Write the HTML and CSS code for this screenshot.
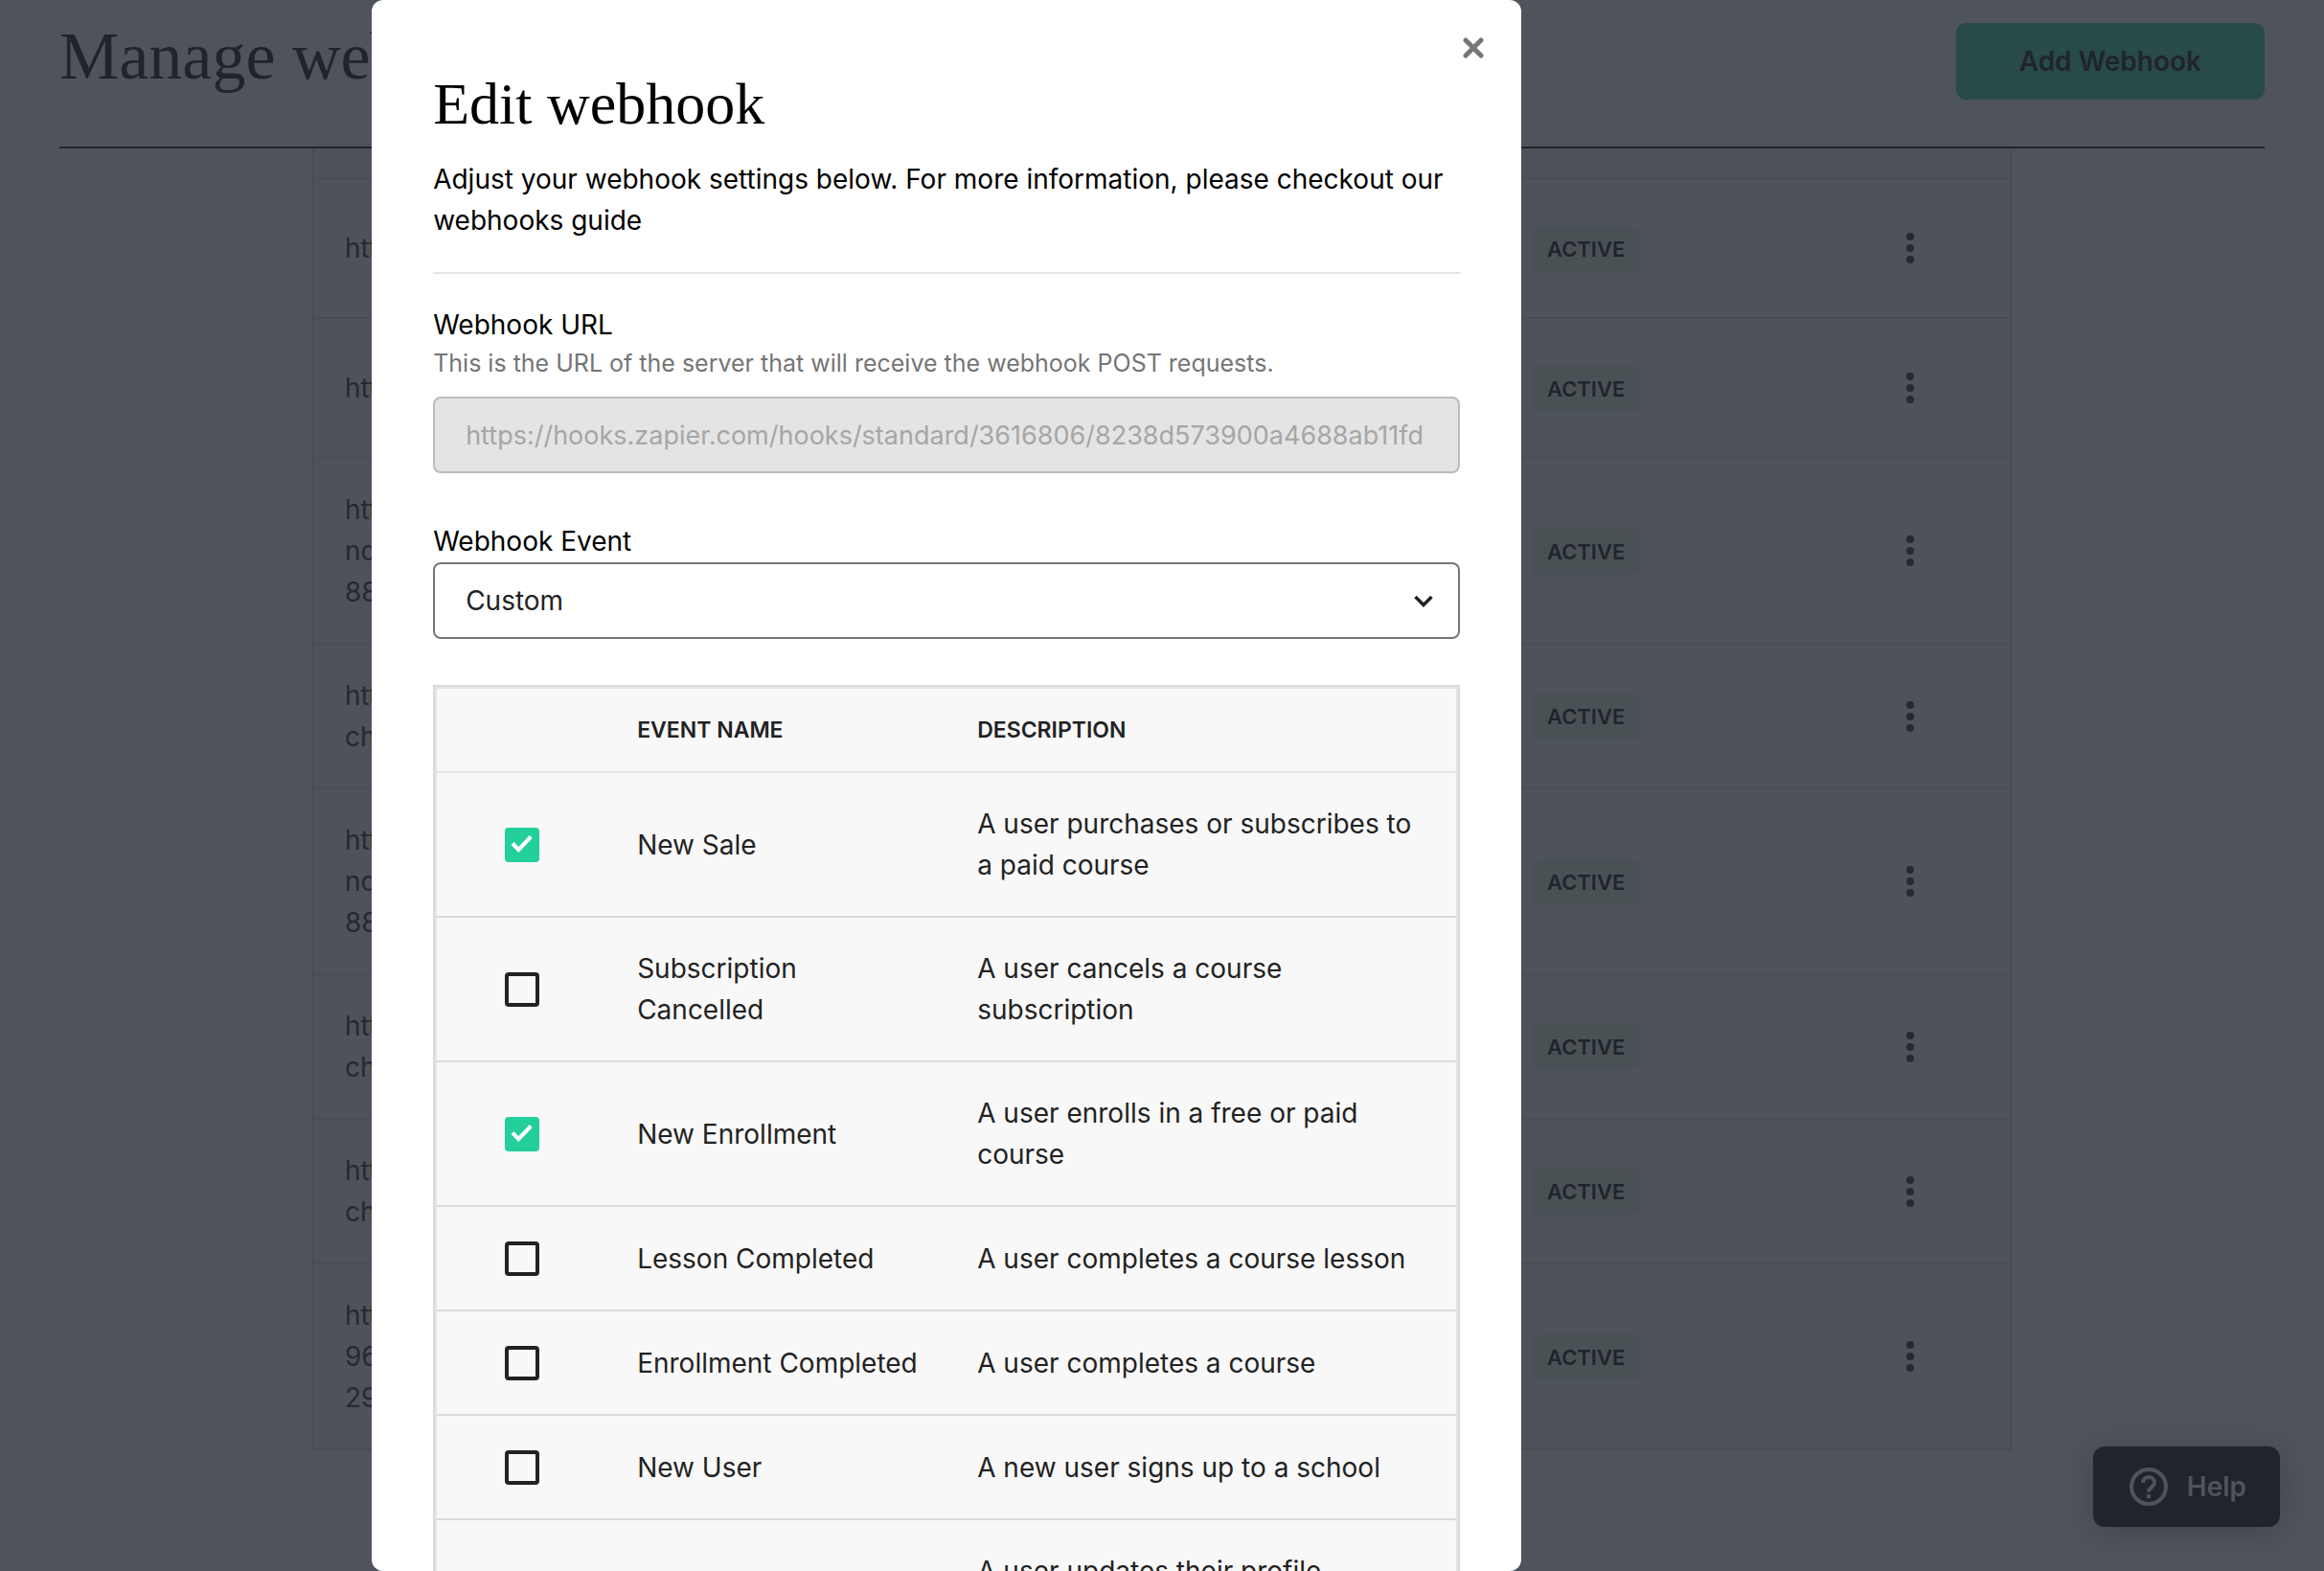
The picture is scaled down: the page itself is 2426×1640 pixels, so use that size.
FILE: index.html
```html
<!DOCTYPE html>
<html lang="en">
<head>
  <meta charset="utf-8">
  <meta name="viewport" content="width=device-width, initial-scale=1">
  <title>Manage webhooks</title>
  <link rel="stylesheet" href="styles.css">
</head>
<body>
  <div class="page">
    <header class="page-header">
      <h1 class="page-title">Manage webhooks</h1>
      <button class="button-primary" type="button">Add Webhook</button>
    </header>
    <main class="page-body">
      <table class="webhooks">
        <colgroup>
          <col class="col-url">
          <col class="col-status">
          <col class="col-actions">
        </colgroup>
        <thead>
          <tr><th aria-label="URL"></th><th aria-label="Status"></th><th aria-label="Actions"></th></tr>
        </thead>
        <tbody>
          <tr>
            <td>https://hooks.zapier.com</td>
            <td><span class="badge">ACTIVE</span></td>
            <td class="actions"><button class="menu-button" type="button" aria-label="Webhook actions"><svg width="8" height="32" viewBox="0 0 8 32"><circle cx="4" cy="4" r="4"/><circle cx="4" cy="16" r="4"/><circle cx="4" cy="28" r="4"/></svg></button></td>
          </tr>
          <tr>
            <td>https://hooks.zapier.com</td>
            <td><span class="badge">ACTIVE</span></td>
            <td class="actions"><button class="menu-button" type="button" aria-label="Webhook actions"><svg width="8" height="32" viewBox="0 0 8 32"><circle cx="4" cy="4" r="4"/><circle cx="4" cy="16" r="4"/><circle cx="4" cy="28" r="4"/></svg></button></td>
          </tr>
          <tr>
            <td>https://hooks.zapier.com/hooks/sta<br>ndard/3616806/8238d573900a46<br>88ab11f</td>
            <td><span class="badge">ACTIVE</span></td>
            <td class="actions"><button class="menu-button" type="button" aria-label="Webhook actions"><svg width="8" height="32" viewBox="0 0 8 32"><circle cx="4" cy="4" r="4"/><circle cx="4" cy="16" r="4"/><circle cx="4" cy="28" r="4"/></svg></button></td>
          </tr>
          <tr>
            <td>https://hooks.zapier.com/hooks/cat<br>ch/3616806</td>
            <td><span class="badge">ACTIVE</span></td>
            <td class="actions"><button class="menu-button" type="button" aria-label="Webhook actions"><svg width="8" height="32" viewBox="0 0 8 32"><circle cx="4" cy="4" r="4"/><circle cx="4" cy="16" r="4"/><circle cx="4" cy="28" r="4"/></svg></button></td>
          </tr>
          <tr>
            <td>https://hooks.zapier.com/hooks/sta<br>ndard/3616806/8238d573900a46<br>88ab11f</td>
            <td><span class="badge">ACTIVE</span></td>
            <td class="actions"><button class="menu-button" type="button" aria-label="Webhook actions"><svg width="8" height="32" viewBox="0 0 8 32"><circle cx="4" cy="4" r="4"/><circle cx="4" cy="16" r="4"/><circle cx="4" cy="28" r="4"/></svg></button></td>
          </tr>
          <tr>
            <td>https://hooks.zapier.com/hooks/cat<br>ch/3616806</td>
            <td><span class="badge">ACTIVE</span></td>
            <td class="actions"><button class="menu-button" type="button" aria-label="Webhook actions"><svg width="8" height="32" viewBox="0 0 8 32"><circle cx="4" cy="4" r="4"/><circle cx="4" cy="16" r="4"/><circle cx="4" cy="28" r="4"/></svg></button></td>
          </tr>
          <tr>
            <td>https://hooks.zapier.com/hooks/cat<br>ch/3616806</td>
            <td><span class="badge">ACTIVE</span></td>
            <td class="actions"><button class="menu-button" type="button" aria-label="Webhook actions"><svg width="8" height="32" viewBox="0 0 8 32"><circle cx="4" cy="4" r="4"/><circle cx="4" cy="16" r="4"/><circle cx="4" cy="28" r="4"/></svg></button></td>
          </tr>
          <tr>
            <td>https://hooks.zapier.com/hooks<br>96<br>29</td>
            <td><span class="badge">ACTIVE</span></td>
            <td class="actions"><button class="menu-button" type="button" aria-label="Webhook actions"><svg width="8" height="32" viewBox="0 0 8 32"><circle cx="4" cy="4" r="4"/><circle cx="4" cy="16" r="4"/><circle cx="4" cy="28" r="4"/></svg></button></td>
          </tr>
        </tbody>
      </table>
    </main>
    <button class="help-button" type="button">
      <svg width="40" height="40" viewBox="0 0 40 40" fill="none" stroke="currentColor" stroke-width="4"><circle cx="20" cy="20" r="18"/><path d="M14 16a6 6 0 0 1 12 0c0 4-6 4.500-6 9.500M20 28v4"/></svg>
      Help
    </button>
  </div>

  <div class="overlay">
    <section class="modal" role="dialog" aria-modal="true" aria-labelledby="modal-title">
      <button class="close-button" type="button" aria-label="Close">
        <svg width="22" height="22" viewBox="0 0 22 22" fill="none" stroke="currentColor" stroke-width="5" stroke-linecap="round"><path d="M3 3l16 16M19 3L3 19"/></svg>
      </button>
      <h2 class="modal-title" id="modal-title">Edit webhook</h2>
      <p class="modal-intro">Adjust your webhook settings below. For more information, please checkout our webhooks guide</p>
      <form class="form">
        <label class="label" for="webhook-url">Webhook URL</label>
        <p class="hint" id="url-hint">This is the URL of the server that will receive the webhook POST requests.</p>
        <input class="control control-disabled" id="webhook-url" type="text" aria-describedby="url-hint" value="https://hooks.zapier.com/hooks/standard/3616806/8238d573900a4688ab11fd" disabled>
        <label class="label label-event" for="webhook-event">Webhook Event</label>
        <div class="select">
          <select class="control" id="webhook-event"><option>Custom</option></select>
          <svg class="select-arrow" width="20" height="14" viewBox="0 0 20 14" fill="none" stroke="currentColor" stroke-width="3.500"><path d="M1.500 2L10 10.500L18.500 2"/></svg>
        </div>
        <table class="events">
          <colgroup>
            <col class="col-check">
            <col class="col-name">
            <col class="col-description">
          </colgroup>
          <thead>
            <tr><td></td><th scope="col">EVENT NAME</th><th scope="col">DESCRIPTION</th></tr>
          </thead>
          <tbody>
            <tr>
              <td class="check-cell"><input class="checkbox" id="event-sale" type="checkbox" checked></td>
              <td><label for="event-sale">New Sale</label></td>
              <td>A user purchases or subscribes to a paid course</td>
            </tr>
            <tr>
              <td class="check-cell"><input class="checkbox" id="event-cancelled" type="checkbox"></td>
              <td><label for="event-cancelled">Subscription Cancelled</label></td>
              <td>A user cancels a course subscription</td>
            </tr>
            <tr>
              <td class="check-cell"><input class="checkbox" id="event-enrollment" type="checkbox" checked></td>
              <td><label for="event-enrollment">New Enrollment</label></td>
              <td>A user enrolls in a free or paid course</td>
            </tr>
            <tr>
              <td class="check-cell"><input class="checkbox" id="event-lesson" type="checkbox"></td>
              <td><label for="event-lesson">Lesson Completed</label></td>
              <td>A user completes a course lesson</td>
            </tr>
            <tr>
              <td class="check-cell"><input class="checkbox" id="event-completed" type="checkbox"></td>
              <td><label for="event-completed">Enrollment Completed</label></td>
              <td>A user completes a course</td>
            </tr>
            <tr>
              <td class="check-cell"><input class="checkbox" id="event-user" type="checkbox"></td>
              <td><label for="event-user">New User</label></td>
              <td>A new user signs up to a school</td>
            </tr>
            <tr>
              <td class="check-cell"><input class="checkbox" id="event-updated" type="checkbox"></td>
              <td><label for="event-updated">User Updated</label></td>
              <td>A user updates their profile information</td>
            </tr>
          </tbody>
        </table>
      </form>
    </section>
  </div>
</body>
</html>
```
FILE: styles.css
```css
* {
  box-sizing: border-box;
}

body {
  margin: 0;
  overflow: hidden;
  background: #fff;
  color: #222;
  font-family: Inter, "Liberation Sans", sans-serif;
  font-size: 28px;
  line-height: 43px;
}

h1,
h2,
p {
  margin: 0;
}

button,
input,
select {
  font: inherit;
  color: inherit;
}

button {
  border: 0;
  padding: 0;
  background: none;
  cursor: pointer;
}

svg {
  display: block;
}

table {
  width: 100%;
  table-layout: fixed;
  border-spacing: 0;
}

td,
th {
  text-align: left;
  vertical-align: middle;
}

/* Page behind the dialog */

.page {
  height: 100vh;
  overflow: hidden;
  padding: 0 62px;
}

.page-header {
  display: flex;
  justify-content: space-between;
  align-items: flex-start;
  padding: 24px 0 49px;
  border-bottom: 2px solid #222;
}

.page-title {
  font-family: "Liberation Serif", serif;
  font-size: 70px;
  font-weight: 400;
  line-height: 70px;
}

.button-primary {
  height: 80px;
  padding: 0 66px;
  border-radius: 10px;
  background: #4ad4a4;
  font-weight: 600;
}

.page-body {
  padding: 0 264px;
}

.webhooks {
  border: 2px solid #dedede;
  border-top: 0;
  background: #f8f8f8;
}

.col-status {
  width: 323px;
}

.col-actions {
  width: 208px;
}

.webhooks th {
  height: 32px;
  padding: 0;
  border-bottom: 2px solid #e4e4e4;
}

.webhooks td {
  height: 146px;
  padding: 32px 32px 31px;
  border-bottom: 2px solid #e4e4e4;
  color: #3a3a3a;
}

.webhooks tr:last-child td {
  border-bottom: 0;
}

.webhooks .actions {
  padding: 0;
}

.menu-button {
  display: block;
  margin: 0 auto;
  padding: 8px;
  fill: #3a3a3a;
}

.badge {
  display: block;
  width: max-content;
  padding: 0 16px;
  border-radius: 8px;
  background: #e3f6e4;
  color: #222;
  font-size: 22px;
  font-weight: 600;
  line-height: 48px;
}

.help-button {
  position: fixed;
  right: 46px;
  bottom: 46px;
  display: flex;
  align-items: center;
  gap: 20px;
  height: 84px;
  padding: 0 35px 0 38px;
  border-radius: 12px;
  background: #222;
  box-shadow: 0 4px 32px rgba(0, 0, 0, 0.3);
  color: #fff;
  font-weight: 600;
}

/* Dialog */

.overlay {
  position: fixed;
  inset: 0;
  padding-left: 16%;
  background: rgba(32, 37, 47, 0.79);
}

.modal {
  position: relative;
  max-width: 1200px;
  height: 100%;
  overflow-y: auto;
  scrollbar-width: none;
  padding: 72px 64px;
  border-radius: 12px;
  background: #fff;
  color: #000;
}

.close-button {
  position: absolute;
  top: 31px;
  right: 31px;
  padding: 8px;
  color: #767676;
}

.modal-title {
  font-family: "Liberation Serif", serif;
  font-size: 62px;
  font-weight: 400;
  line-height: 72px;
}

.modal-intro {
  margin-top: 22px;
  padding-bottom: 32px;
  border-bottom: 2px solid #e4e4e4;
}

.form {
  padding-top: 32px;
}

.label {
  display: block;
}

.label-event {
  margin-top: 50px;
}

.hint {
  margin-bottom: 16px;
  color: #757575;
  font-size: 25px;
  line-height: 37px;
}

.control {
  display: block;
  width: 100%;
  height: 80px;
  padding: 0 32px;
  border: 2px solid #767676;
  border-radius: 8px;
  background: #fff;
  color: #222;
  appearance: none;
}

.control-disabled {
  border-color: #bbb;
  background: #e4e4e4;
  color: #a6a6a6;
  font-size: 27px;
}

.select {
  position: relative;
}

.select-arrow {
  position: absolute;
  top: 34px;
  right: 28px;
  color: #222;
  pointer-events: none;
}

.events {
  margin-top: 48px;
  border: 2px solid #dadada;
  outline: 2px solid #e4e4e4;
  outline-offset: -4px;
  padding: 2px;
  background: #f8f8f8;
  color: #222;
}

.col-check {
  width: 177px;
}

.col-name {
  width: 355px;
}

.events thead td,
.events th {
  padding: 31px 32px;
  border-bottom: 2px solid #e4e4e4;
  font-size: 23px;
  font-weight: 600;
  line-height: 24px;
}

.events tbody td {
  height: 109px;
  padding: 32px 24px 31px 32px;
  border-bottom: 2px solid #dadada;
}

.events tbody td:last-child {
  padding-right: 36px;
}

.events tbody .check-cell {
  padding: 0;
}

.checkbox {
  display: block;
  width: 36px;
  height: 36px;
  margin: 0 auto;
  border: 4px solid #222;
  border-radius: 4px;
  appearance: none;
}

.checkbox:checked {
  border: 0;
  background: #23cf9b url("data:image/svg+xml,%3Csvg xmlns='http://www.w3.org/2000/svg' viewBox='0 0 36 36'%3E%3Cpath d='M8 16.500l6.300 6.500L27.300 9.500' fill='none' stroke='white' stroke-width='4'/%3E%3C/svg%3E");
}
```
